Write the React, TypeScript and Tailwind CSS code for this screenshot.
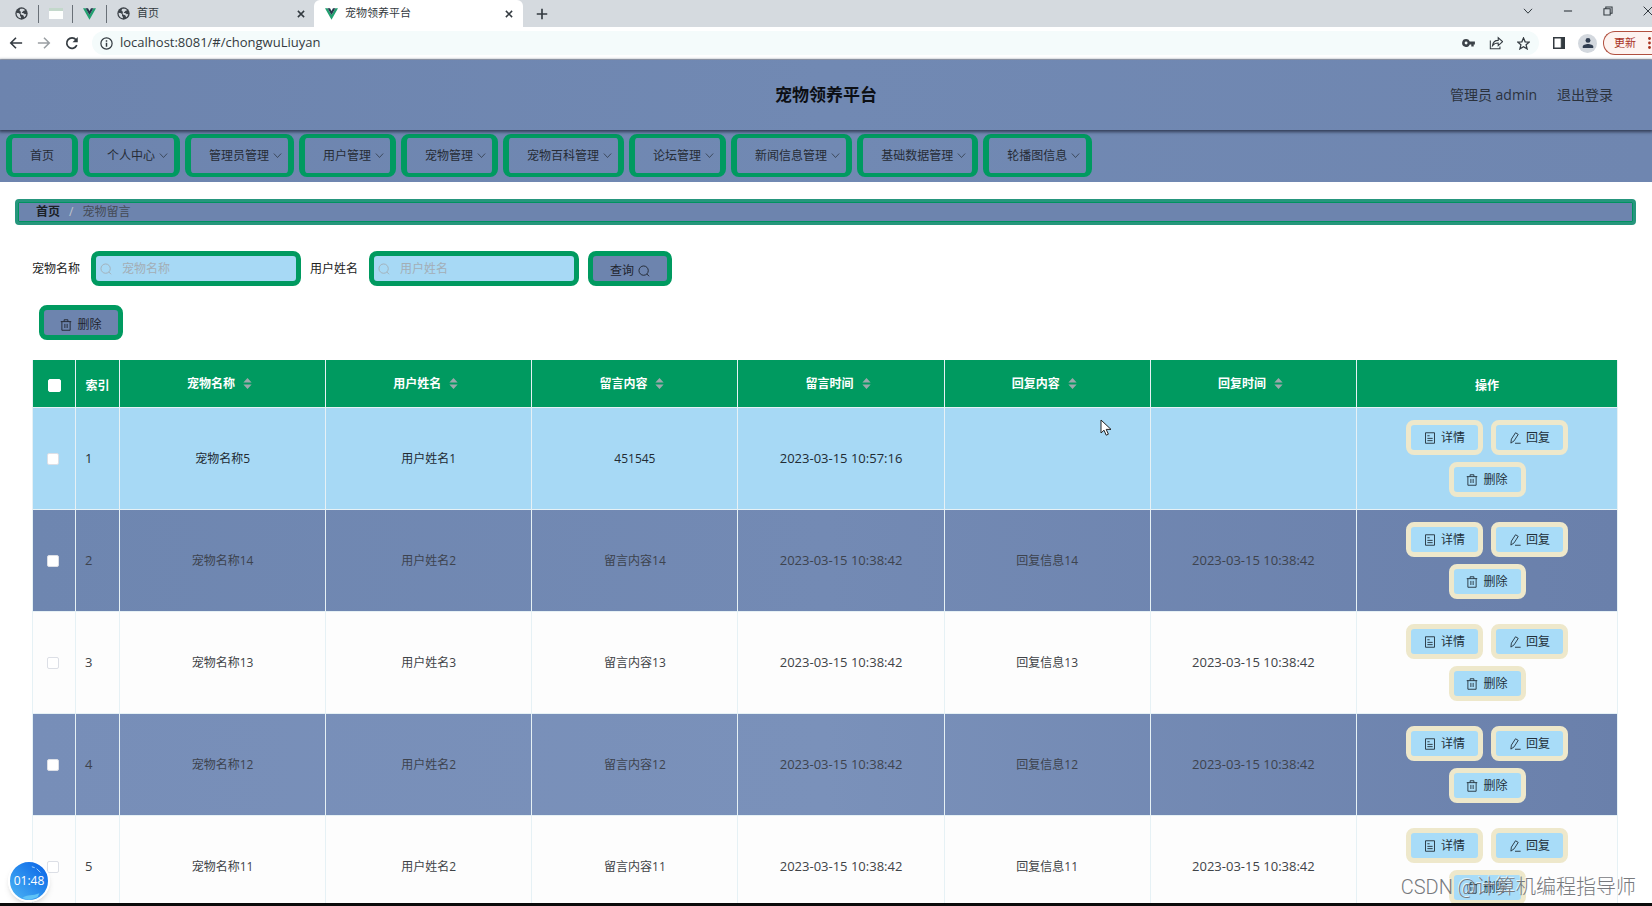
import { useState, type ReactNode } from "react";

const menus = ["首页", "个人中心", "管理员管理", "用户管理", "宠物管理", "宠物百科管理", "论坛管理", "新闻信息管理", "基础数据管理", "轮播图信息"];

const columns = ["宠物名称", "用户姓名", "留言内容", "留言时间", "回复内容", "回复时间"];

const rows = [
  { id: 1, pet: "宠物名称5", user: "用户姓名1", content: "451545", time: "2023-03-15 10:57:16", reply: "", replyTime: "" },
  { id: 2, pet: "宠物名称14", user: "用户姓名2", content: "留言内容14", time: "2023-03-15 10:38:42", reply: "回复信息14", replyTime: "2023-03-15 10:38:42" },
  { id: 3, pet: "宠物名称13", user: "用户姓名3", content: "留言内容13", time: "2023-03-15 10:38:42", reply: "回复信息13", replyTime: "2023-03-15 10:38:42" },
  { id: 4, pet: "宠物名称12", user: "用户姓名2", content: "留言内容12", time: "2023-03-15 10:38:42", reply: "回复信息12", replyTime: "2023-03-15 10:38:42" },
  { id: 5, pet: "宠物名称11", user: "用户姓名2", content: "留言内容11", time: "2023-03-15 10:38:42", reply: "回复信息11", replyTime: "2023-03-15 10:38:42" },
];

function rowStyle(index: number) {
  if (index === 0) return "bg-[#a7d9f5] text-[#222b33]";
  if (index === 3) return "bg-gradient-to-r from-[#778eb8] via-[#7a91ba] to-[#6a80ab] text-[#3d434e]";
  if (index % 2 === 1) return "bg-gradient-to-r from-[#6e86b0] via-[#738ab4] to-[#6a80ab] text-[#3d434e]";
  return "bg-[#fdfdfd] text-[#3f4347]";
}

function Icon({ children, className = "size-3" }: { children: ReactNode; className?: string }) {
  return (
    <svg viewBox="0 0 16 16" className={"shrink-0 " + className} fill="none" stroke="currentColor" strokeWidth="1.2" aria-hidden="true">
      {children}
    </svg>
  );
}

function Globe() {
  return (
    <svg viewBox="0 0 16 16" className="size-[13px] shrink-0" aria-hidden="true">
      <circle cx="8" cy="8" r="7.6" fill="#3c4248" />
      <path d="M2 7.200c1.800.2 3 .5 4 1.500.8.9-.2 1.700.3 2.500.5.7 1.200.8 1 2.700C4 13.700 1.800 11 2 7.200zM7 2.200c2-.5 4 0 5.300 1.500-.6 1-1.700.6-2.300 1.500-.5.8-1.800.7-1.600 1.700.3 1 2.300.4 3 1.300.6.8 1.600.6 2.400.5-.2 1.700-1 3-2.300 4-.8-.6-.6-1.800-1.500-2.400-1-.6-2.600-.5-3-1.900-.3-1.200.6-1.800 0-2.600-.4-.6-1.200-.5-1.300-1.400-.1-1 .5-1.900 1.300-2.200z" fill="#d5dadf" />
    </svg>
  );
}

function Vue() {
  return (
    <svg viewBox="0 0 16 14" className="h-[12px] w-[13px] shrink-0" aria-hidden="true">
      <path d="M0 0h3.200L8 8.300 12.800 0H16L8 14z" fill="#22a070" />
      <path d="M3.200 0h3L8 3.200 9.800 0h3L8 8.300z" fill="#24374b" />
    </svg>
  );
}

function Search({ className }: { className?: string }) {
  return <Icon className={className}><circle cx="7.500" cy="7.500" r="6.200" /><path d="M11.800 12l3 3" /></Icon>;
}

function Trash() {
  return <Icon><path d="M1 3.500h14M5.500 3.500V1h5v2.500M2.500 3.500V15h11V3.500M6.500 6.500V12M9.500 6.500V12" /></Icon>;
}

function Detail() {
  return <Icon><path d="M2 1h12v14H2zM4.500 5h3M4.500 8.500h7M4.500 11.500h7" /></Icon>;
}

function Edit() {
  return <Icon><path d="M3.200 9.500L8.700 1l3.600 2.200-5.500 8.600L2.500 14.800zM8 15h7.500" /></Icon>;
}

function Sorter() {
  return (
    <svg viewBox="0 0 9 12" className="ml-2 h-[11px] w-[9px]" fill="#9ca8ac" aria-hidden="true">
      <path d="M0 5l4.500-5L9 5zM0 7l4.500 5L9 7z" />
    </svg>
  );
}

function BrowserBar() {
  return (
    <div className="text-[#333a40]">
      <div className="flex h-[27px] items-center bg-[#d5dadf] text-[11px]">
        <div className="flex h-full w-[314px] items-center pr-2 pl-[15px]">
          <Globe />
          <i className="ml-[10px] h-[18px] w-px bg-[#697077]" />
          <svg viewBox="0 0 14 11" className="ml-[10px] h-[11px] w-[14px]" aria-hidden="true">
            <path d="M0 0h14v11H0z" fill="#fdfefd" />
            <path d="M0 0h14v3H0z" fill="#c3d8cb" />
          </svg>
          <i className="mr-[10px] ml-[9px] h-[18px] w-px bg-[#697077]" />
          <Vue />
          <i className="mr-[10px] ml-[10px] h-[18px] w-px bg-[#697077]" />
          <Globe />
          <span className="ml-[7px] flex-1">首页</span>
          <button aria-label="关闭首页"><Icon className="size-[10px]"><path d="M3 3l10 10M13 3L3 13" strokeWidth="2.400" /></Icon></button>
        </div>
        <div className="flex h-full w-[209px] items-center rounded-t-md bg-white pr-[9px] pl-[11px]">
          <Vue />
          <span className="ml-[7px] flex-1">宠物领养平台</span>
          <button aria-label="关闭宠物领养平台"><Icon className="size-[10px]"><path d="M3 3l10 10M13 3L3 13" strokeWidth="2.400" /></Icon></button>
        </div>
        <button className="ml-[13px]" aria-label="新标签页"><Icon className="size-3"><path d="M8 1v14M1 8h14" strokeWidth="2.200" /></Icon></button>
        <div className="-mr-px ml-auto flex items-center gap-[30px] pb-[6px]">
          <button aria-label="搜索标签页"><Icon className="size-[10px]"><path d="M1.500 4.500L8 11.500l6.500-7" strokeWidth="1.600" /></Icon></button>
          <button aria-label="最小化"><Icon className="size-[10px]"><path d="M1.500 8h13" strokeWidth="1.800" /></Icon></button>
          <button aria-label="还原"><Icon className="size-[10px]"><path d="M1.500 4.500h10v10h-10zM4.500 4V1.500h10v10H12" strokeWidth="1.700" /></Icon></button>
          <button aria-label="关闭窗口"><Icon className="size-[10px]"><path d="M1 1l14 14M15 1L1 15" strokeWidth="1.600" /></Icon></button>
        </div>
      </div>
      <div className="flex h-[33px] items-center border-b border-[#b9c2d0] bg-white pl-[9px]">
        <button aria-label="后退"><Icon className="size-[14px]"><path d="M15 8H2M8 2L2 8l6 6" strokeWidth="1.800" /></Icon></button>
        <button className="ml-[14px] text-[#9a9fa3]" aria-label="前进"><Icon className="size-[14px]"><path d="M1 8h13M8 2l6 6-6 6" strokeWidth="1.800" /></Icon></button>
        <button className="ml-[14px]" aria-label="刷新">
          <Icon className="size-[14px]"><path d="M13.500 10.500A6 6 0 1 1 12.600 4.200" strokeWidth="1.900" /><path d="M14.600 1v6H8.600z" fill="currentColor" stroke="none" /></Icon>
        </button>
        <div className="ml-[13px] flex h-6 flex-1 items-center rounded-full bg-[#f4fbfb] pr-[9px] pl-2">
          <Icon className="size-[13px]"><circle cx="8" cy="8" r="6.900" strokeWidth="1.500" /><path d="M8 7v5M8 4v1.700" strokeWidth="1.800" /></Icon>
          <input aria-label="地址" className="ml-[7px] flex-1 bg-transparent text-[13px] outline-none" defaultValue="localhost:8081/#/chongwuLiuyan" />
          <div className="flex items-center gap-[14px]">
            <svg viewBox="0 0 16 10" className="h-2 w-[13px]" aria-hidden="true">
              <path fillRule="evenodd" d="M5 0a5 5 0 0 1 4.600 3H16v4h-1.500v2.500h-3V7H9.600A5 5 0 1 1 5 0zM5 3.200a1.800 1.800 0 1 0 0 3.600 1.800 1.800 0 0 0 0-3.600z" fill="#3c4248" />
            </svg>
            <Icon className="size-[14px]"><path d="M1.500 5v9.500h11V12M4 11c.5-4 3-6 6.500-6V2l5 4.500-5 4.500V8C8 8 5.500 9 4 11z" /></Icon>
            <Icon className="size-[13px]"><path d="M8 1.200l2 4.700 5 .4-3.800 3.300 1.200 5L8 11.900l-4.400 2.700 1.200-5L1 6.300l5-.4z" strokeWidth="1.600" /></Icon>
          </div>
        </div>
        <Icon className="ml-[14px] size-3"><path d="M1 1h14v14H1z" strokeWidth="2" /><path d="M11 1h4v14h-4z" fill="currentColor" /></Icon>
        <span className="ml-[13px] flex size-[19px] items-center justify-center rounded-full bg-[#d3d8de]">
          <svg viewBox="0 0 16 16" className="size-3" fill="#303d50" aria-hidden="true"><circle cx="8" cy="4.500" r="3.300" /><path d="M1 14.500v-1.700C1 10.500 5 9.200 8 9.200s7 1.300 7 3.600v1.700z" /></svg>
        </span>
        <button className="ml-[6px] flex h-6 w-[49px] items-center justify-between rounded-l-full border border-r-0 border-[#b1503f] bg-[#fdf3f0] pr-px pl-[10px] text-[11px] text-[#a8321f]">
          更新
          <svg viewBox="0 0 3 12" className="h-3 w-[3px]" fill="currentColor" aria-hidden="true"><circle cx="1.500" cy="1.500" r="1.400" /><circle cx="1.500" cy="6" r="1.400" /><circle cx="1.500" cy="10.500" r="1.400" /></svg>
        </button>
      </div>
    </div>
  );
}

function NavMenu() {
  return (
    <nav className="flex gap-[5px] bg-gradient-to-r from-[#6d84ae] via-[#7189b3] to-[#6f86b0] px-1.5 pt-[4px] pb-[5px]">
      {menus.map((name, i) => (
        <a
          key={name}
          href="#"
          className={"flex h-[43px] items-center rounded-lg border-x-[6px] border-y-4 border-[#009a60] pl-[18px] text-xs whitespace-nowrap text-[#262c36] " + (i === 0 ? "pr-[18px]" : "pr-[6px]")}
        >
          {name}
          {i > 0 && <Icon className="ml-[4px] size-[9px]"><path d="M1.500 4.500L8 11.500l6.500-7" /></Icon>}
        </a>
      ))}
    </nav>
  );
}

function SearchField({ id, label }: { id: string; label: string }) {
  return (
    <>
      <label htmlFor={id}>{label}</label>
      <div className="mr-[9px] ml-[11px] flex h-[35px] w-[210px] items-center rounded-lg border-[5px] border-[#009a60] bg-[#a7d9f5] pl-1 text-[#a3aeb5]">
        <Search className="size-3" />
        <input id={id} placeholder={label} className="ml-2.5 w-full min-w-0 bg-transparent text-[#333] outline-none placeholder:text-[#a3aeb5]" />
      </div>
    </>
  );
}

function ActionButton({ icon, text }: { icon: ReactNode; text: string }) {
  return (
    <button className="flex h-[35px] w-[77px] items-center justify-center gap-[5px] rounded-lg border-[5px] border-[#eee8cb] bg-[#a8dcf8] text-[#22303a]">
      {icon}
      {text}
    </button>
  );
}

function App() {
  const [selected, setSelected] = useState<number[]>([]);

  const toggle = (id: number) => {
    setSelected(selected.includes(id) ? selected.filter((s) => s !== id) : [...selected, id]);
  };

  const toggleAll = () => {
    setSelected(selected.length === rows.length ? [] : rows.map((r) => r.id));
  };

  const checkbox = "block shrink-0 appearance-none rounded-xs border bg-white checked:bg-[#409eff]";
  const cell = "border-r border-b border-[#e6f1f5] text-center";

  return (
    <div className="relative flex h-screen flex-col overflow-hidden bg-white font-['Open_Sans','Noto_Sans_CJK_SC',sans-serif] text-xs">
      <BrowserBar />
      <header className="relative z-10 grid h-[70px] shrink-0 grid-cols-3 items-center bg-gradient-to-r from-[#6d84ae] via-[#7189b3] to-[#6f86b0] shadow-[0_1px_3px_1px_rgba(40,48,70,0.85)]">
        <h1 className="col-start-2 text-center text-[17px] font-bold text-[#0c0f14]">宠物领养平台</h1>
        <div className="flex justify-end gap-5 pr-[39px] text-sm text-[#2b323d]">
          <span>管理员 admin</span>
          <a href="#">退出登录</a>
        </div>
      </header>
      <NavMenu />

      <main className="min-h-0 flex-1 overflow-hidden">
        <div className="mt-[17px] mr-4 ml-[15px] flex h-[26px] items-center rounded-sm border-[3px] border-[#26967d] bg-[#6d84ae] pl-[18px] inset-ring inset-ring-[#009360]">
          <a href="#" className="font-bold text-[#1b2026]">首页</a>
          <span className="mx-[9px] text-[#c0c4cc]">/</span>
          <span className="text-[#454b56]">宠物留言</span>
        </div>

        <form className="mt-[26px] flex items-center pl-8 text-[#222]" onSubmit={(e) => e.preventDefault()}>
          <SearchField id="pet" label="宠物名称" />
          <SearchField id="user" label="用户姓名" />
          <button className="flex h-[35px] w-[84px] items-center justify-center gap-1 rounded-lg border-[5px] border-[#009a60] bg-[#6d84ae] pt-1 text-[#1f252e]">
            查询
            <Search className="size-3" />
          </button>
        </form>
        <button className="mt-[19px] ml-[39px] flex h-[35px] w-[84px] items-center justify-center gap-[5px] rounded-lg border-[5px] border-[#009a60] bg-[#6d84ae] pt-1 text-[#1f252e]">
          <Trash />
          删除
        </button>

        <div className="mt-5 mr-[34px] ml-8">
          <table className="w-full table-fixed border-separate border-spacing-0 border-l border-[#e6f1f5]">
            <thead className="bg-[#009a60] text-white">
              <tr className="h-12">
                <th className={cell + " w-[43px] pt-1 pl-[15px]"}>
                  <input type="checkbox" aria-label="全选" className={checkbox + " size-[13px] border-white"} checked={selected.length === rows.length} onChange={toggleAll} />
                </th>
                <th className={cell + " w-[44px] pt-1"}>索引</th>
                {columns.map((c) => (
                  <th key={c} className={cell}>
                    <span className="flex items-center justify-center pr-1.5">{c}<Sorter /></span>
                  </th>
                ))}
                <th className={cell + " w-[261px] pt-1"}>操作</th>
              </tr>
            </thead>
            <tbody>
              {rows.map((row, i) => (
                <tr key={row.id} className={"h-[102px] " + rowStyle(i)}>
                  <td className={cell + " pl-[14px]"}>
                    <input type="checkbox" aria-label={"选择" + row.id} className={checkbox + " size-3 border-[#dcdfe6]"} checked={selected.includes(row.id)} onChange={() => toggle(row.id)} />
                  </td>
                  <td className="border-r border-b border-[#e6f1f5] pl-[9px] text-[13px]">{row.id}</td>
                  <td className={cell}>{row.pet}</td>
                  <td className={cell}>{row.user}</td>
                  <td className={cell}>{row.content}</td>
                  <td className={cell + " text-[13px]"}>{row.time}</td>
                  <td className={cell}>{row.reply}</td>
                  <td className={cell + " text-[13px]"}>{row.replyTime}</td>
                  <td className={cell}>
                    <div className="flex flex-wrap justify-center gap-x-2 gap-y-[7px] px-10">
                      <ActionButton icon={<Detail />} text="详情" />
                      <ActionButton icon={<Edit />} text="回复" />
                      <ActionButton icon={<Trash />} text="删除" />
                    </div>
                  </td>
                </tr>
              ))}
            </tbody>
          </table>
        </div>
      </main>

      <div className="relative z-10 h-[3px] shrink-0 bg-[#0b0b0b]" />

      <div className="absolute bottom-1 left-2 flex size-[42px] items-center justify-center overflow-hidden rounded-full border-2 border-white bg-gradient-to-tr from-[#4db4f3] to-[#0a5fe6] text-white shadow-md">
        <svg viewBox="0 0 40 40" className="absolute inset-0" aria-hidden="true">
          <path d="M13 38c5-4 11-2 18-5l-2 4-9 3z" fill="#5fc3f7" />
          <path d="M23 5l3 1M28 7l4 4" stroke="#a7d4fb" strokeWidth="1" />
        </svg>
        <span className="relative">01:48</span>
      </div>

      <div className="pointer-events-none absolute right-4 bottom-1 font-['Roboto','Noto_Sans_CJK_SC',sans-serif] text-xl leading-[30px] font-light text-[#77797d] [text-shadow:-1px_-1px_0_#ffffffb0]">CSDN @计算机编程指导师</div>

      <svg viewBox="0 0 12 18" className="pointer-events-none absolute top-[419px] left-[1100px] h-[18px] w-3" aria-hidden="true">
        <path d="M1 1v13l3-2.800 2.200 5 2.200-1-2.200-4.800H11z" fill="#fff" stroke="#222" />
      </svg>
    </div>
  );
}

export default App;
